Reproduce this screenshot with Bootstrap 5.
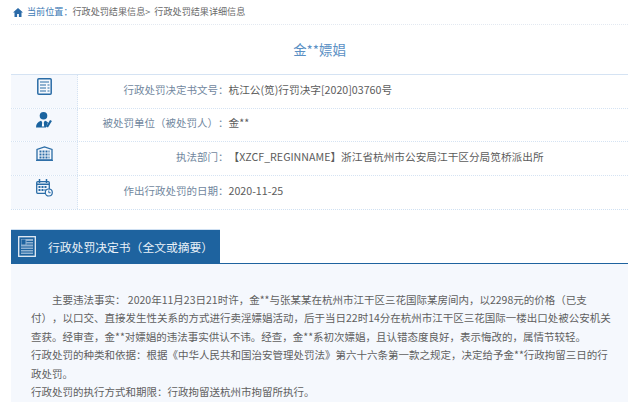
<!DOCTYPE html>
<html lang="zh">
<head>
<meta charset="utf-8">
<title>行政处罚结果详细信息</title>
<link href="https://cdn.jsdelivr.net/npm/bootstrap@5.3.0/dist/css/bootstrap.min.css" rel="stylesheet">
<style>
html,body{height:402px;overflow:hidden;background:#fff}
body{font-family:"Noto Sans CJK SC","Liberation Sans",sans-serif;font-size:10.67px;color:#5c5c5c;font-feature-settings:"chws" 0;text-spacing-trim:space-all}
.pg{width:617px;margin-left:11px}
.crumb{height:25px;padding-left:2px;border-bottom:1px dotted #e3e9f1;font-size:9.1px;color:#6a6a6a}
.crumb b{font-weight:400;color:#3d7bb5}
.ttl{height:49px;color:#5a90c4;font-size:13.4px}
.grid-info{border-top:1px solid #d5e3f3;border-bottom:1px dotted #cfe0f2}
.info-row{height:33.5px;border-bottom:1px dotted #d5e3f3}
.info-row:last-child{border-bottom:0}
.ic-cell{width:67px;background:#f5f8fd;border-right:1px dotted #d5e3f3;padding-bottom:9px}
.lab{width:150.5px;color:#71879e;padding-bottom:3px;font-size:10.5px}
.val{color:#5c5c5c;padding-bottom:3px}
.tab-wrap{margin-top:19px;border-bottom:1px solid #1e639f;height:35px}
.tab-head{width:209px;height:34px;background:#1e639f;border-top:1px solid #cfe0f2;color:#e9f1f8;font-size:11.8px;padding-left:7px;gap:12px}
.panel{background:#f5f8fd;height:141px;padding:27px 8px 0 20px;line-height:18.45px;white-space:nowrap;color:#5f5f5f;font-size:10.5px}
.panel p{margin:0}
.ind{padding-left:21px}
</style>
</head>
<body>
<div class="pg">
  <div class="crumb d-flex align-items-center gap-1">
    <svg width="10" height="9" viewBox="0 0 10 9"><path fill="#2a6aa8" d="M5 0 0 4.500h1.500V9h2.600V6h1.800v3h2.600V4.500H10z"/></svg>
    <span><b>当前位置：</b>行政处罚结果信息&gt; &nbsp;行政处罚结果详细信息</span>
  </div>
  <div class="ttl d-flex align-items-center justify-content-center">金**嫖娼</div>
  <div class="grid-info">
    <div class="info-row d-flex">
      <div class="ic-cell d-flex align-items-center justify-content-center">
        <svg width="15" height="17" viewBox="0 0 15 17"><rect x=".8" y=".8" width="13.400" height="15.400" rx="1" fill="#f5f8fd" stroke="#2a6ca6" stroke-width="1.500"/><path stroke="#2a6ca6" stroke-width="1.200" fill="none" d="M3 4h9M3 7h6M3 10h6M3 13h6M10.500 7h2M10.500 10h2M10.500 13h2"/></svg>
      </div>
      <div class="lab d-flex align-items-center justify-content-end">行政处罚决定书文号：</div>
      <div class="val d-flex align-items-center">杭江公(笕)行罚决字[2020]03760号</div>
    </div>
    <div class="info-row d-flex">
      <div class="ic-cell d-flex align-items-center justify-content-center">
        <svg width="17" height="16" viewBox="0 0 17 16"><ellipse cx="7.500" cy="3.800" rx="3.800" ry="3.800" fill="#1a639f"/><path fill="#1a639f" d="M0 15.500c0-3.500 1.800-6 5-6.800L7 11l2-2.300c1.300.3 2.300.8 3 1.800L10 15.500z"/><path fill="#fff" d="M6.400 9.500h1.200l.6 5h-2.400z"/><path stroke="#1a639f" stroke-width="2.200" d="M11 15l4-6.500"/></svg>
      </div>
      <div class="lab d-flex align-items-center justify-content-end">被处罚单位（被处罚人）：</div>
      <div class="val d-flex align-items-center">金**</div>
    </div>
    <div class="info-row d-flex">
      <div class="ic-cell d-flex align-items-center justify-content-center">
        <svg width="17" height="15" viewBox="0 0 17 15"><path fill="#f5f8fd" stroke="#2a6ca6" stroke-width="1.300" d="M1 14V3.500L8.500 1 16 3.500V14z"/><path stroke="#2a6ca6" stroke-width="2" stroke-dasharray="2 1" d="M3.500 5.500h10M3.500 8.500h10M3.500 11.500h10"/><path stroke="#2a6ca6" d="M0 14.400h17"/></svg>
      </div>
      <div class="lab d-flex align-items-center justify-content-end">执法部门：</div>
      <div class="val d-flex align-items-center">【XZCF_REGINNAME】浙江省杭州市公安局江干区分局笕桥派出所</div>
    </div>
    <div class="info-row d-flex">
      <div class="ic-cell d-flex align-items-center justify-content-center">
        <svg width="17" height="18" viewBox="0 0 17 18"><rect x=".7" y="2.700" width="12.600" height="11.600" rx="1" fill="none" stroke="#2a6ca6" stroke-width="1.300"/><path stroke="#2a6ca6" stroke-width="1.500" d="M3.500 0v4M10.500 0v4M1 5.200h12"/><path stroke="#2a6ca6" stroke-width="1.800" stroke-dasharray="2 1" d="M2.500 8h9M2.500 11h7"/><circle cx="12.800" cy="13.500" r="3.500" fill="#f5f8fd" stroke="#2a6ca6" stroke-width="1.200"/><path stroke="#2a6ca6" fill="none" d="M12.800 11.500v2.200h1.800"/></svg>
      </div>
      <div class="lab d-flex align-items-center justify-content-end">作出行政处罚的日期：</div>
      <div class="val d-flex align-items-center">2020-11-25</div>
    </div>
  </div>
  <div class="tab-wrap">
    <div class="tab-head d-flex align-items-center">
      <svg width="18" height="21" viewBox="0 0 18 21"><rect x=".7" y=".7" width="16.600" height="19.600" fill="#1e639f" stroke="#e6eef6" stroke-width="1.300"/><rect x="3" y="3" width="12" height="15" fill="#8fb2d2"/><path stroke="#1e639f" d="M3 11h12M3 13.500h12M3 16h12M8.500 5.500H15M8.500 8H15"/><rect x="3.500" y="3.500" width="4" height="5" fill="#1e639f"/></svg>
      <span>行政处罚决定书（全文或摘要）</span>
    </div>
  </div>
  <div class="panel">
    <p class="ind">主要违法事实：&nbsp;2020年11月23日21时许，金**与张某某在杭州市江干区三花国际某房间内，以2298元的价格（已支</p>
    <p>付），以口交、直接发生性关系的方式进行卖淫嫖娼活动，后于当日22时14分在杭州市江干区三花国际一楼出口处被公安机关</p>
    <p>查获。经审查，金**对嫖娼的违法事实供认不讳。经查，金**系初次嫖娼，且认错态度良好，表示悔改的，属情节较轻。</p>
    <p>行政处罚的种类和依据：根据《中华人民共和国治安管理处罚法》第六十六条第一款之规定，决定给予金**行政拘留三日的行</p>
    <p>政处罚。</p>
    <p>行政处罚的执行方式和期限：行政拘留送杭州市拘留所执行。</p>
  </div>
</div>
<script src="https://cdn.jsdelivr.net/npm/bootstrap@5.3.0/dist/js/bootstrap.bundle.min.js"></script>
</body>
</html>
